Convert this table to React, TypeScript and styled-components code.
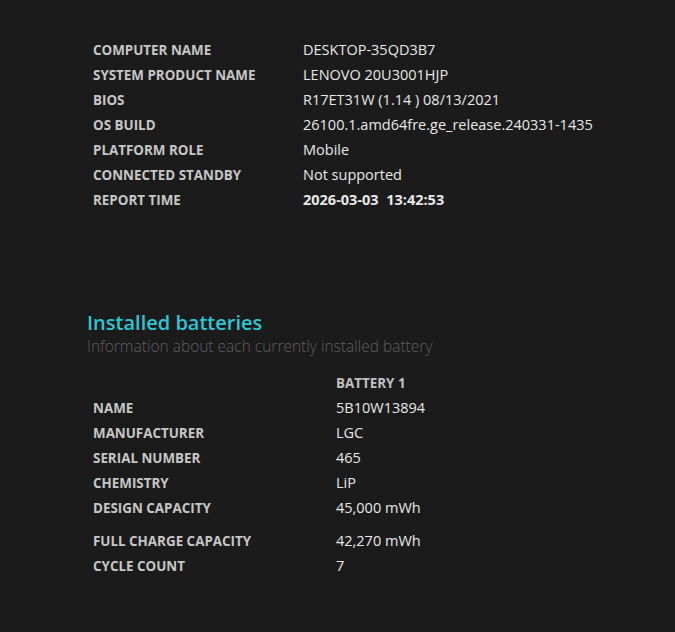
import React, { FC } from 'react'
import styled, { createGlobalStyle } from 'styled-components'

const GlobalStyle = createGlobalStyle`
html, body {
 margin: 0;
 padding: 0;
 background: #1b1b1b;
}
body {
 font-family: "Open Sans", "Noto Sans", "Liberation Sans", sans-serif;
 color: #e6e6e6;
}
`

interface Row {
 label: string
 value: string
 gapBefore?: boolean
 strong?: boolean
}

const systemRows: Row[] = [
 { label: 'Computer name', value: 'DESKTOP-35QD3B7' },
 { label: 'System product name', value: 'LENOVO 20U3001HJP' },
 { label: 'BIOS', value: 'R17ET31W (1.14 ) 08/13/2021' },
 { label: 'OS build', value: '26100.1.amd64fre.ge_release.240331-1435' },
 { label: 'Platform role', value: 'Mobile' },
 { label: 'Connected standby', value: 'Not supported' },
 { label: 'Report time', value: '2026-03-03\u00a0\u00a013:42:53', strong: true },
]

const batteryRows: Row[] = [
 { label: 'Name', value: '5B10W13894' },
 { label: 'Manufacturer', value: 'LGC' },
 { label: 'Serial number', value: '465' },
 { label: 'Chemistry', value: 'LiP' },
 { label: 'Design capacity', value: '45,000 mWh' },
 { label: 'Full charge capacity', value: '42,270 mWh', gapBefore: true },
 { label: 'Cycle count', value: '7' },
]

const App: FC = () => {
 return (
  <Page>
   <GlobalStyle />
   <InfoTable>
    {systemRows.map(r => (
     <InfoRow key={r.label} $labelWidth={210}>
      <Label>{r.label}</Label>
      <Value $strong={r.strong}>{r.value}</Value>
     </InfoRow>
    ))}
   </InfoTable>

   <Section>
    <Heading>Installed batteries</Heading>
    <Subheading>Information about each currently installed battery</Subheading>
    <BatteryTable>
     <InfoRow $labelWidth={243} $height={24}>
      <span />
      <ColumnHead>Battery 1</ColumnHead>
     </InfoRow>
     {batteryRows.map(r => (
      <InfoRow key={r.label} $labelWidth={243} $gap={r.gapBefore}>
       <Label>{r.label}</Label>
       <Value>{r.value}</Value>
      </InfoRow>
     ))}
    </BatteryTable>
   </Section>
  </Page>
 )
}

export default App;


const Page = styled.div`
width: 675px;
height: 632px;
box-sizing: border-box;
padding: 37px 0 0 87px;
background: #1b1b1b;
overflow: hidden;
`

const InfoTable = styled.div`
display: flex;
flex-direction: column;
padding-left: 6px;
`

const BatteryTable = styled(InfoTable)`
margin-top: 15px;
`

const InfoRow = styled.div<{ $labelWidth: number, $height?: number, $gap?: boolean }>`
display: grid;
grid-template-columns: ${p => p.$labelWidth}px auto;
align-items: center;
height: ${p => p.$height ?? 25}px;
margin-top: ${p => p.$gap ? 8 : 0}px;
`

const Label = styled.div`
font-size: 13.4px;
font-weight: 700;
text-transform: uppercase;
color: #c6c6c6;
white-space: nowrap;
`

const Value = styled.div<{ $strong?: boolean }>`
font-size: 14.5px;
font-weight: ${p => p.$strong ? 700 : 400};
color: #e8e8e8;
white-space: nowrap;
`

const ColumnHead = styled(Label)`
color: #c0c0c0;
`

const Section = styled.div`
margin-top: 98px;
`

const Heading = styled.div`
font-size: 20px;
font-weight: 600;
color: #2ec6d4;
line-height: 26px;
`

const Subheading = styled.div`
font-size: 15.5px;
font-weight: 300;
color: #5e5e5e;
line-height: 20px;
`
